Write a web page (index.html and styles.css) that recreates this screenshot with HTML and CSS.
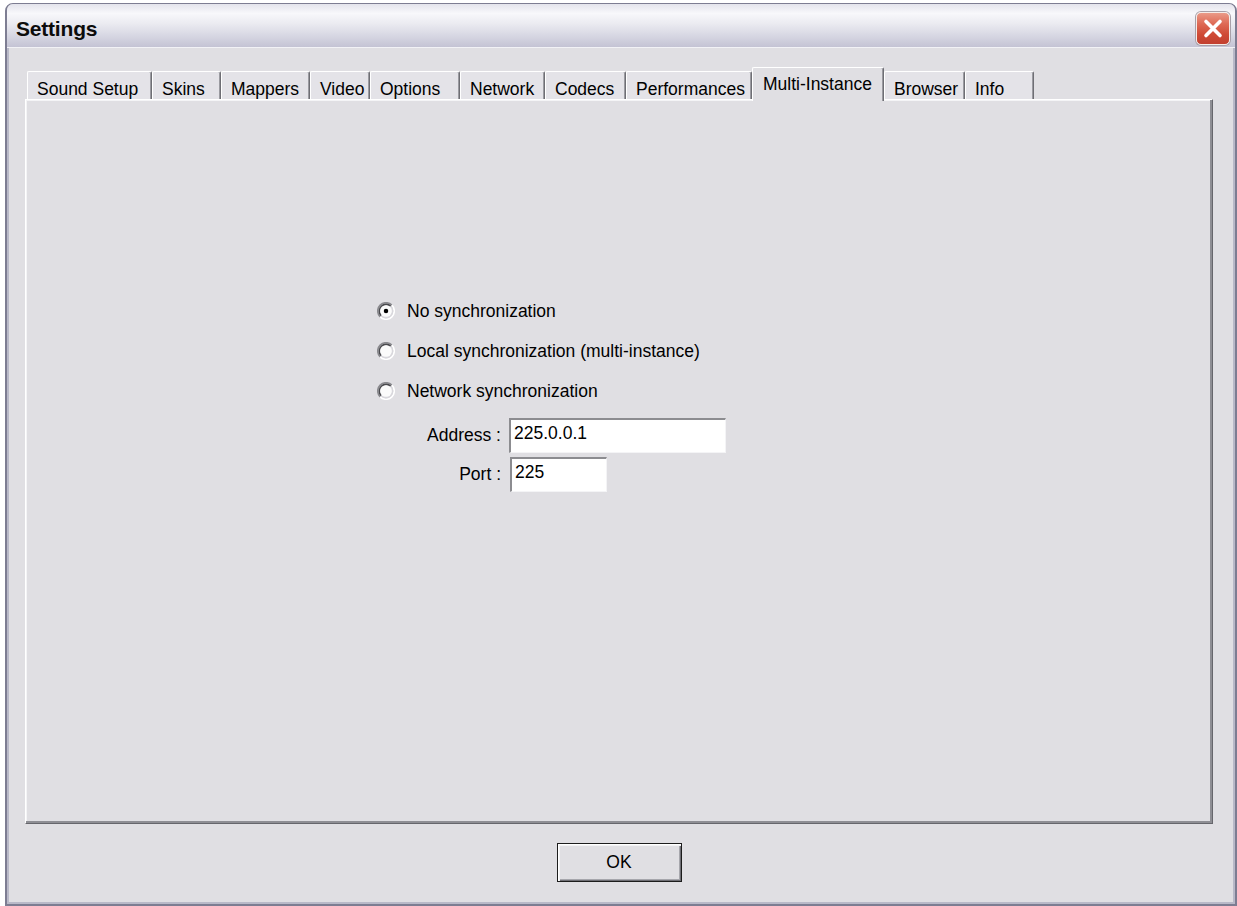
FILE: index.html
```html
<!DOCTYPE html>
<html>
<head>
<meta charset="utf-8">
<title>Settings</title>
<link rel="stylesheet" href="styles.css">
</head>
<body>
<div class="window">
  <div class="titlebar">
    <div class="title">Settings</div>
    <div class="close">
      <svg width="34" height="33" viewBox="0 0 34 33">
        <path d="M10 9.5 L24 23.5 M24 9.5 L10 23.5" stroke="#fff" stroke-width="3.6" stroke-linecap="round"/>
      </svg>
    </div>
  </div>
  <div class="client">
    <div class="tabs">
      <div class="tab t-sound">Sound Setup</div>
      <div class="tab t-skins">Skins</div>
      <div class="tab t-mappers">Mappers</div>
      <div class="tab t-video">Video</div>
      <div class="tab t-options">Options</div>
      <div class="tab t-network">Network</div>
      <div class="tab t-codecs">Codecs</div>
      <div class="tab t-perf">Performances</div>
      <div class="tab active t-multi">Multi-Instance</div>
      <div class="tab t-browser">Browser</div>
      <div class="tab t-info">Info</div>
    </div>
    <div class="panel">
      <div class="group">
        <div class="radio-row">
          <svg class="radio" width="18" height="18" viewBox="0 0 12 12">
            <path d="M2.11 9.89 A5.5 5.5 0 0 1 9.89 2.11" fill="none" stroke="#8a8a8e" stroke-width="1.1"/>
            <path d="M9.89 2.11 A5.5 5.5 0 0 1 2.11 9.89" fill="none" stroke="#ffffff" stroke-width="1.1"/>
            <path d="M2.82 9.18 A4.5 4.5 0 0 1 9.18 2.82" fill="none" stroke="#4a4a4e" stroke-width="1.1"/>
            <path d="M9.18 2.82 A4.5 4.5 0 0 1 2.82 9.18" fill="none" stroke="#d8d7dc" stroke-width="1.1"/>
            <circle cx="6" cy="6" r="3.9" fill="#fbfbfb"/>
            <circle cx="6" cy="6" r="1.5" fill="#000"/>
          </svg>
          <span>No synchronization</span>
        </div>
        <div class="radio-row">
          <svg class="radio" width="18" height="18" viewBox="0 0 12 12">
            <path d="M2.11 9.89 A5.5 5.5 0 0 1 9.89 2.11" fill="none" stroke="#8a8a8e" stroke-width="1.1"/>
            <path d="M9.89 2.11 A5.5 5.5 0 0 1 2.11 9.89" fill="none" stroke="#ffffff" stroke-width="1.1"/>
            <path d="M2.82 9.18 A4.5 4.5 0 0 1 9.18 2.82" fill="none" stroke="#4a4a4e" stroke-width="1.1"/>
            <path d="M9.18 2.82 A4.5 4.5 0 0 1 2.82 9.18" fill="none" stroke="#d8d7dc" stroke-width="1.1"/>
            <circle cx="6" cy="6" r="3.9" fill="#fbfbfb"/>
          </svg>
          <span>Local synchronization (multi-instance)</span>
        </div>
        <div class="radio-row">
          <svg class="radio" width="18" height="18" viewBox="0 0 12 12">
            <path d="M2.11 9.89 A5.5 5.5 0 0 1 9.89 2.11" fill="none" stroke="#8a8a8e" stroke-width="1.1"/>
            <path d="M9.89 2.11 A5.5 5.5 0 0 1 2.11 9.89" fill="none" stroke="#ffffff" stroke-width="1.1"/>
            <path d="M2.82 9.18 A4.5 4.5 0 0 1 9.18 2.82" fill="none" stroke="#4a4a4e" stroke-width="1.1"/>
            <path d="M9.18 2.82 A4.5 4.5 0 0 1 2.82 9.18" fill="none" stroke="#d8d7dc" stroke-width="1.1"/>
            <circle cx="6" cy="6" r="3.9" fill="#fbfbfb"/>
          </svg>
          <span>Network synchronization</span>
        </div>
        <div class="fields">
          <div class="label">Address :</div>
          <div class="field f-address">225.0.0.1</div>
          <div class="label">Port :</div>
          <div class="field f-port">225</div>
        </div>
      </div>
    </div>
    <div class="footer">
      <div class="button">OK</div>
    </div>
  </div>
</div>
</body>
</html>
```

FILE: styles.css
```css
* { box-sizing: border-box; }

html, body {
  margin: 0;
  padding: 0;
  background: #ffffff;
}

body {
  font-family: "Liberation Sans", Arial, sans-serif;
  font-size: 17.5px;
  color: #000;
}

.window {
  margin: 3px 0 0 5px;
  width: 1232px;
  height: 903px;
  background: #e0dfe3;
  border: 2px solid #7d7d92;
  border-top-width: 1px;
  border-radius: 8px 8px 0 0;
  box-shadow: inset 0 0 0 2px #b9b9c8;
  display: flex;
  flex-direction: column;
}

.titlebar {
  height: 44px;
  flex: none;
  display: flex;
  align-items: flex-start;
  justify-content: space-between;
  padding: 0 5px 0 9px;
  border-radius: 6px 6px 0 0;
  background: linear-gradient(to bottom, #e4e4ec 0%, #f8f8fb 22%, #ebebf1 45%, #d6d6e2 75%, #c4c3d4 100%);
  border-bottom: 1px solid #f2f2f6;
}

.title {
  margin-top: 13px;
  font-weight: bold;
  font-size: 21px;
  color: #0c0c0c;
  letter-spacing: -0.2px;
}

.close {
  margin-top: 8px;
  width: 34px;
  height: 33px;
  border-radius: 5px;
  border: 1px solid #f4ece8;
  background: linear-gradient(to bottom, #ea9a88 0%, #de6a55 35%, #cf4a35 70%, #c24030 100%);
  box-shadow: 0 0 0 1px #a8a0a8;
  display: flex;
}

.close svg { display: block; margin: -1px; }

.client {
  flex: 1;
  display: flex;
  flex-direction: column;
  padding: 19px 22px 0 18px;
}

.tabs {
  height: 32px;
  flex: none;
  display: flex;
  align-items: flex-end;
  margin-left: 2px;
}

.tab {
  height: 28px;
  padding: 7px 0 0 9px;
  line-height: 20px;
  background: #e4e3e8;
  border-top: 1px solid #ffffff;
  border-left: 1px solid #ffffff;
  border-right: 1px solid #6e6e74;
  box-shadow: inset -1px 0 0 #9a9aa0;
  border-radius: 2px 2px 0 0;
  white-space: nowrap;
  font-size: 17.5px;
}

.tab.active {
  position: relative;
  z-index: 1;
  height: 34px;
  margin-bottom: -2px;
  padding-top: 6px;
  padding-left: 10px;
  background: #e0dfe3;
}

.t-sound { width: 125px; }
.t-skins { width: 69px; }
.t-mappers { width: 89px; }
.t-video { width: 60px; }
.t-options { width: 90px; }
.t-network { width: 85px; }
.t-codecs { width: 81px; }
.t-perf { width: 126px; }
.t-multi { width: 132px; }
.t-browser { width: 81px; }
.t-info { width: 69px; }

.panel {
  height: 725px;
  flex: none;
  border-top: 1px solid #ffffff;
  border-left: 1px solid #ffffff;
  border-right: 1px solid #66666c;
  border-bottom: 1px solid #66666c;
  box-shadow: inset -2px -2px 0 #8e8e94, inset 1px 1px 0 #f4f4f6;
  padding: 191px 0 0 351px;
}

.group {
  display: flex;
  flex-direction: column;
}

.radio-row {
  height: 40px;
  display: flex;
  align-items: center;
  gap: 12px;
}

.radio { display: block; flex: none; }

.fields {
  display: grid;
  grid-template-columns: 124px auto;
  column-gap: 8px;
  row-gap: 4px;
  margin-top: 7px;
  justify-items: start;
}

.label {
  justify-self: end;
  align-self: center;
  white-space: nowrap;
}

.field {
  height: 35px;
  background: #ffffff;
  border-top: 2px solid #8c8c90;
  border-left: 2px solid #8c8c90;
  border-right: 1px solid #f4f4f6;
  border-bottom: 1px solid #f4f4f6;
  padding: 3px 0 0 3px;
  line-height: 20px;
}

.f-address { width: 217px; }
.f-port { width: 97px; margin-left: 1px; }

.footer {
  flex: 1;
  display: flex;
  justify-content: center;
  align-items: flex-start;
  padding-top: 19px;
}

.button {
  width: 125px;
  height: 39px;
  border: 1px solid #1c1c1c;
  background: #e0dfe3;
  box-shadow: inset 1px 1px 0 #ffffff, inset 2px 2px 0 #f2f2f4, inset -1px -1px 0 #6e6e74, inset -2px -2px 0 #a6a6ac;
  display: flex;
  align-items: center;
  justify-content: center;
  font-size: 17.5px;
}
```
